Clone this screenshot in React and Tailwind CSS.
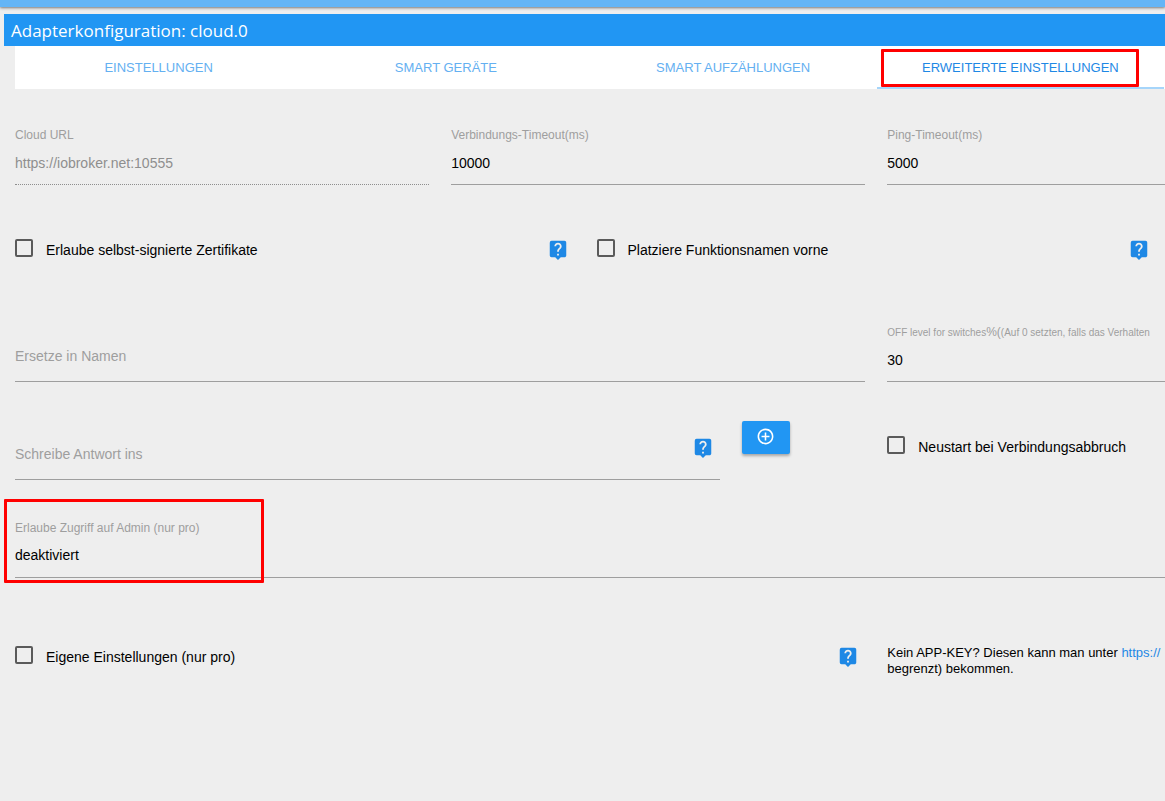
import React, { useState } from 'react';
import { MdLiveHelp, MdAddCircleOutline } from 'react-icons/md';

const tabs = ['Einstellungen', 'Smart Geräte', 'Smart Aufzählungen', 'Erweiterte Einstellungen'];

const HelpLink = ({ className = '' }) => (
    <a href="#help" aria-label="Hilfe" className={`block text-[#1e88e5] ${className}`}>
        <MdLiveHelp size={22} />
    </a>
);

const Field = ({ id, label, value, disabled, className = '' }) => (
    <div className={`px-[11px] ${className}`}>
        <label htmlFor={id} className="block text-xs leading-[17px] whitespace-nowrap text-[#9e9e9e]">
            {label}
        </label>
        <input
            id={id}
            type="text"
            defaultValue={value}
            disabled={disabled}
            className="block h-[41px] w-full border-b border-[#9e9e9e] bg-transparent pb-0.5 text-sm text-black outline-none disabled:border-dotted disabled:border-[#8e8e8e] disabled:text-[#8e8e8e]"
        />
    </div>
);

// empty field, the label rests on the input line
const EmptyField = ({ id, label, className = '', children }) => {
    const [value, setValue] = useState('');
    return (
        <div className={`grid items-start px-[11px] ${className}`}>
            <label
                htmlFor={id}
                className={`col-start-1 row-start-1 text-sm leading-[35px] text-[#9e9e9e] ${value ? 'sr-only' : ''}`}
            >
                {label}
            </label>
            <input
                id={id}
                type="text"
                value={value}
                onChange={(e) => setValue(e.target.value)}
                className="col-start-1 row-start-1 h-[43px] w-full border-b border-[#9e9e9e] bg-transparent text-sm text-black outline-none"
            />
            {children}
        </div>
    );
};

const Checkbox = ({ id, label, help, className = '' }) => (
    <div className={`flex items-start px-[11px] ${className}`}>
        <input
            id={id}
            type="checkbox"
            className="h-[18px] w-[18px] shrink-0 appearance-none rounded-xs border-2 border-[#5a5a5a] checked:bg-[#2196f3]"
        />
        <label htmlFor={id} className="ml-[13px] flex-1 text-sm leading-[22px] whitespace-nowrap text-black">
            {label}
        </label>
        {help && <HelpLink className="mr-1.5" />}
    </div>
);

const App = () => {
    const [active, setActive] = useState(3);

    return (
        <div className="min-h-screen overflow-hidden bg-[#eeeeee] font-['Liberation_Sans',Arial,sans-serif]">
            <div className="h-[7px] bg-[#64b5f6] shadow-[0_1px_3px_rgba(0,0,0,0.5)]" />

            <h1 className="mt-[7px] ml-1 bg-[#2196f3] pt-0.5 pl-[7px] font-['Open_Sans','Noto_Sans',sans-serif] text-[17px] leading-[30px] text-white">
                Adapterkonfiguration: cloud.0
            </h1>

            <div role="tablist" className="ml-[15px] grid grid-cols-4 bg-white pr-px">
                {tabs.map((tab, i) => (
                    <div key={tab} className="relative">
                        <button
                            type="button"
                            role="tab"
                            aria-selected={i === active}
                            onClick={() => setActive(i)}
                            className={`block h-[43px] w-full border-b-2 pt-0.5 text-[13px] uppercase ${i === active ? 'border-[#a6d5fa] text-[#1e88e5]' : 'border-transparent text-[#64b0f1]'}`}
                        >
                            {tab}
                        </button>
                        {i === 3 && (
                            <div className="pointer-events-none absolute top-[3px] right-[25px] bottom-0.5 left-1 rounded-[1px] border-3 border-[#ff0000]" />
                        )}
                    </div>
                ))}
            </div>

            <form className="-mr-0.5 ml-1" onSubmit={(e) => e.preventDefault()}>
                <div className="mt-[38px] grid grid-cols-8">
                    <Field id="url" label="Cloud URL" value="https://iobroker.net:10555" disabled className="col-span-3" />
                    <Field id="timeout" label="Verbindungs-Timeout(ms)" value="10000" className="col-span-3" />
                    <Field id="ping" label="Ping-Timeout(ms)" value="5000" className="col-span-2 pr-0" />
                </div>

                <div className="mt-[54px] grid grid-cols-8">
                    <Checkbox id="certs" label="Erlaube selbst-signierte Zertifikate" help className="col-span-4" />
                    <Checkbox id="functions" label="Platziere Funktionsnamen vorne" help className="col-span-4" />
                </div>

                <div className="mt-[63px] grid grid-cols-8 items-end">
                    <EmptyField id="replaces" label="Ersetze in Namen" className="col-span-6" />
                    <Field
                        id="offLevel"
                        label={
                            <span className="text-[10px] leading-none">
                                OFF level for switches<span className="text-xs leading-none">%(</span>(Auf 0 setzten, falls das Verhalten
                            </span>
                        }
                        value="30"
                        className="col-span-2 pr-0"
                    />
                </div>

                <div className="mt-[39px] grid grid-cols-8 items-start">
                    <EmptyField id="text2command" label="Schreibe Antwort ins" className="col-span-5 mt-4">
                        <HelpLink className="col-start-1 row-start-1 mr-1.5 justify-self-end" />
                    </EmptyField>
                    <div className="px-[11px]">
                        <button
                            type="button"
                            aria-label="Hinzufügen"
                            className="flex h-[33px] w-12 justify-center rounded-xs bg-[#2196f3] pt-1.5 text-white shadow-[0_2px_3px_rgba(0,0,0,0.3)]"
                        >
                            <MdAddCircleOutline size={19} />
                        </button>
                    </div>
                    <Checkbox id="restart" label="Neustart bei Verbindungsabbruch" className="col-span-2 mt-[15px]" />
                </div>

                <div className="relative mt-10 pl-[11px]">
                    <label htmlFor="allowAdmin" className="block text-xs leading-[17px] text-[#9e9e9e]">
                        Erlaube Zugriff auf Admin (nur pro)
                    </label>
                    <select
                        id="allowAdmin"
                        className="block h-[41px] w-full appearance-none border-b border-[#9e9e9e] bg-transparent pb-1 text-sm text-black outline-none"
                    >
                        <option>deaktiviert</option>
                    </select>
                    <div className="pointer-events-none absolute -top-[21px] left-0 h-[84px] w-[260px] rounded-[1px] border-3 border-[#ff0000]" />
                </div>

                <div className="mt-[67px] grid grid-cols-8">
                    <Checkbox id="ownSettings" label="Eigene Einstellungen (nur pro)" help className="col-span-6 pt-px" />
                    <p className="col-span-2 pl-[11px] text-[13px] leading-4 whitespace-nowrap text-black">
                        Kein APP-KEY? Diesen kann man unter <a href="#key" className="text-[#1e88e5]">https://</a>
                        <br />
                        begrenzt) bekommen.
                    </p>
                </div>
            </form>
        </div>
    );
};

export default App;
